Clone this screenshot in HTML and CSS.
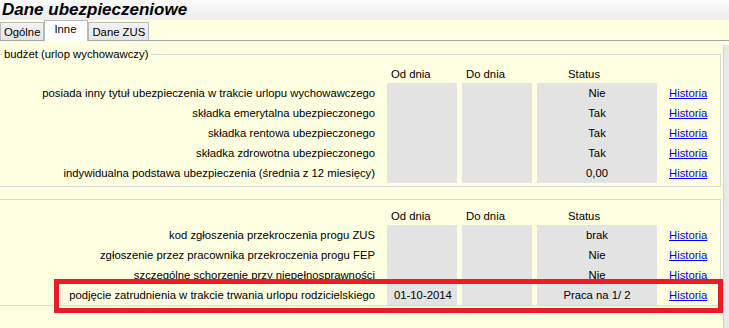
FILE: index.html
```html
<!DOCTYPE html>
<html lang="pl">
<head>
<meta charset="utf-8">
<title>Dane ubezpieczeniowe</title>
<link rel="stylesheet" href="styles.css">
</head>
<body>
<div class="page">
  <div class="titlebar"><h1 class="title">Dane ubezpieczeniowe</h1></div>
  <div class="tabbar">
    <div class="tab">Ogólne</div>
    <div class="tab tab-active">Inne</div>
    <div class="tab">Dane ZUS</div>
  </div>
  <div class="content">
    <div class="groups">
      <fieldset class="group group-first">
        <legend class="legend">budżet (urlop wychowawczy)</legend>
        <div class="grid">
          <div class="hcell"></div>
          <div class="hcell hleft">Od dnia</div>
          <div class="hcell hleft">Do dnia</div>
          <div class="hcell hstatus">Status</div>
          <div class="hcell"></div>

          <div class="label">posiada inny tytuł ubezpieczenia w trakcie urlopu wychowawczego</div>
          <div class="cell"></div><div class="cell"></div><div class="cell status">Nie</div>
          <div class="link"><a href="#">Historia</a></div>

          <div class="label">składka emerytalna ubezpieczonego</div>
          <div class="cell"></div><div class="cell"></div><div class="cell status">Tak</div>
          <div class="link"><a href="#">Historia</a></div>

          <div class="label">składka rentowa ubezpieczonego</div>
          <div class="cell"></div><div class="cell"></div><div class="cell status">Tak</div>
          <div class="link"><a href="#">Historia</a></div>

          <div class="label">składka zdrowotna ubezpieczonego</div>
          <div class="cell"></div><div class="cell"></div><div class="cell status">Tak</div>
          <div class="link"><a href="#">Historia</a></div>

          <div class="label">indywidualna podstawa ubezpieczenia (średnia z 12 miesięcy)</div>
          <div class="cell"></div><div class="cell"></div><div class="cell status">0,00</div>
          <div class="link"><a href="#">Historia</a></div>
        </div>
      </fieldset>

      <div class="group group-second">
        <div class="grid">
          <div class="hcell"></div>
          <div class="hcell hleft">Od dnia</div>
          <div class="hcell hleft">Do dnia</div>
          <div class="hcell hstatus">Status</div>
          <div class="hcell"></div>

          <div class="label">kod zgłoszenia przekroczenia progu ZUS</div>
          <div class="cell"></div><div class="cell"></div><div class="cell status">brak</div>
          <div class="link"><a href="#">Historia</a></div>

          <div class="label">zgłoszenie przez pracownika przekroczenia progu FEP</div>
          <div class="cell"></div><div class="cell"></div><div class="cell status">Nie</div>
          <div class="link"><a href="#">Historia</a></div>

          <div class="label">szczególne schorzenie przy niepełnosprawności</div>
          <div class="cell"></div><div class="cell"></div><div class="cell status">Nie</div>
          <div class="link"><a href="#">Historia</a></div>

          <div class="label">podjęcie zatrudnienia w trakcie trwania urlopu rodzicielskiego</div>
          <div class="cell date">01-10-2014</div><div class="cell"></div><div class="cell status">Praca na 1/ 2</div>
          <div class="link"><a href="#">Historia</a></div>
        </div>
        <div class="highlight"></div>
      </div>
    </div>
    <div class="scrollstrip"></div>
  </div>
</div>
</body>
</html>
```
FILE: styles.css
```css
html, body {
  margin: 0;
  padding: 0;
  background: #ffffe1;
}
.page {
  width: 729px;
  height: 328px;
  overflow: hidden;
  font-family: "Liberation Sans", Arial, sans-serif;
  font-size: 11.3px;
  color: #000;
  background: #ffffe1;
}
.titlebar {
  height: 20px;
  background: linear-gradient(#fbfbfb, #ececec);
  display: flex;
  align-items: center;
}
.title {
  margin: 0 0 0 2px;
  font-size: 17px;
  font-weight: bold;
  font-style: italic;
  line-height: 20px;
}
.tabbar {
  height: 20px;
  display: flex;
  align-items: flex-end;
  border-bottom: 1px solid #a5a5a5;
  background: #ffffe1;
}
.tab {
  height: 18px;
  line-height: 18px;
  padding: 0 3px;
  border: 1px solid #b9b9b9;
  border-bottom: none;
  background: linear-gradient(#f2f2f2, #e6e6e6);
  box-sizing: border-box;
}
.tab-active {
  height: 21px;
  line-height: 17px;
  margin-bottom: -1px;
  background: #ffffff;
  padding: 0 11px 0 9px;
}
.content {
  display: flex;
}
.groups {
  width: 722px;
  display: flex;
  flex-direction: column;
}
.group {
  position: relative;
  margin: 0;
  border: 1px solid #d7d7d7;
  border-left: none;
  min-inline-size: 0;
}
.group-first {
  margin-top: 6px;
  padding: 6px 0 3px 0;
}
.legend {
  margin-left: 2px;
  padding: 0 3px 0 2px;
  line-height: 14px;
}
.group-second {
  margin-top: 12px;
  padding: 9px 0 0 0;
}
.grid {
  display: grid;
  grid-template-columns: 382px 70px 70px 120px 1fr;
  column-gap: 5px;
}
.hcell {
  height: 16px;
  line-height: 14px;
}
.hleft {
  padding-left: 4px;
}
.hstatus {
  padding-left: 31px;
}
.label {
  height: 20px;
  line-height: 20px;
  text-align: right;
  padding-right: 7px;
  white-space: nowrap;
}
.cell {
  height: 20px;
  line-height: 20px;
  background: #e3e3e3;
}
.status {
  text-align: center;
}
.date {
  padding-left: 7px;
}
.link {
  height: 20px;
  line-height: 20px;
  padding-left: 7px;
}
.link a {
  color: #0000ff;
  text-decoration: underline;
}
.highlight {
  position: absolute;
  left: 54px;
  top: 79px;
  width: 669px;
  height: 34px;
  box-sizing: border-box;
  border: 5px solid #ed1c24;
  pointer-events: none;
}
.scrollstrip {
  width: 5px;
  margin-left: 2px;
  margin-top: 4px;
  height: 283px;
  background: #e8e8e8;
  border-left: 1px solid #d3d3d3;
}
```
